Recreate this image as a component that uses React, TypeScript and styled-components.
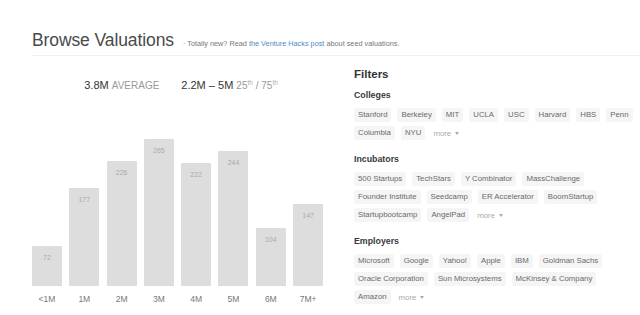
import React from 'react'
import styled, { createGlobalStyle } from 'styled-components'

const GlobalStyle = createGlobalStyle`
	body {
		margin: 0;
		background: #fff;
		font-family: "Liberation Sans", Helvetica, Arial, sans-serif;
	}
`

const bars = [
	{ label: '<1M', value: 72 },
	{ label: '1M', value: 177 },
	{ label: '2M', value: 226 },
	{ label: '3M', value: 265 },
	{ label: '4M', value: 222 },
	{ label: '5M', value: 244 },
	{ label: '6M', value: 104 },
	{ label: '7M+', value: 147 }
]

const filters = [
	{
		title: 'Colleges',
		items: ['Stanford', 'Berkeley', 'MIT', 'UCLA', 'USC', 'Harvard', 'HBS', 'Penn', 'Columbia', 'NYU']
	},
	{
		title: 'Incubators',
		items: ['500 Startups', 'TechStars', 'Y Combinator', 'MassChallenge', 'Founder Institute', 'Seedcamp', 'ER Accelerator', 'BoomStartup', 'Startupbootcamp', 'AngelPad']
	},
	{
		title: 'Employers',
		items: ['Microsoft', 'Google', 'Yahoo!', 'Apple', 'IBM', 'Goldman Sachs', 'Oracle Corporation', 'Sun Microsystems', 'McKinsey & Company', 'Amazon']
	}
]

// px per valuation count
const SCALE = 0.555

const Page = styled.div`
	padding-left: 32px;
	width: 608px;
	overflow: hidden;
`

const Header = styled.div`
	display: flex;
	align-items: baseline;
	padding-top: 30px;
	padding-bottom: 5px;
	border-bottom: 1px solid #eeeeee;
`

const Title = styled.h1`
	margin: 0;
	font-size: 17.5px;
	font-weight: normal;
	color: #4a4a4a;
	line-height: 20px;
	letter-spacing: -0.1px;
`

const Subtitle = styled.span`
	margin-left: 9px;
	font-size: 7.3px;
	color: #777;

	a {
		color: #4a8ac8;
		text-decoration: none;
	}
`

const Main = styled.div`
	display: flex;
`

const ChartColumn = styled.div`
	width: 298px;
	display: flex;
	flex-direction: column;
`

const Stats = styled.div`
	display: flex;
	justify-content: center;
	gap: 22px;
	padding-top: 23px;
	height: 20px;
	font-size: 11px;
`

const Stat = styled.div`
	color: #333;

	span {
		color: #999;
		font-size: 10px;
	}

	sup {
		color: #aaa;
		font-size: 6.5px;
		line-height: 0;
	}
`

const Bars = styled.div`
	display: flex;
	align-items: flex-end;
	gap: 7.3px;
	height: 187px;
`

const Bar = styled.div`
	width: 30px;
	background: #dddddd;
	border-radius: 1px 1px 0 0;
	text-align: center;
	font-size: 7px;
	color: #aaa;
	padding-top: 8px;
	box-sizing: border-box;
`

const Labels = styled.div`
	display: flex;
	gap: 7.3px;
	padding-top: 8px;
`

const Label = styled.div`
	width: 30px;
	text-align: center;
	font-size: 8.5px;
	color: #777;
`

const FilterColumn = styled.div`
	margin-left: 24px;
	flex: 1;
	padding-top: 11px;
`

const FiltersHeading = styled.h2`
	margin: 0 0 9px;
	font-size: 11.5px;
	font-weight: bold;
	color: #333;
	line-height: 14px;
`

const Section = styled.div`
	margin-bottom: 14px;
`

const SectionTitle = styled.h3`
	margin: 0 0 7px;
	font-size: 8.8px;
	font-weight: bold;
	color: #3a3a3a;
	line-height: 11px;
`

const Tags = styled.div`
	display: flex;
	flex-wrap: wrap;
	align-items: center;
	gap: 4px 6px;
	width: 282px;
`

const Tag = styled.span`
	display: inline-block;
	height: 14px;
	line-height: 14px;
	padding: 0 4px;
	font-size: 7.8px;
	color: #6a6a6a;
	background: #f5f5f5;
	border-radius: 3px;
	box-sizing: border-box;
`

const More = styled.span`
	font-size: 7.8px;
	color: #aaa;
	margin-left: 2px;

	&::after {
		content: '';
		display: inline-block;
		margin-left: 4px;
		vertical-align: 1px;
		border-left: 2px solid transparent;
		border-right: 2px solid transparent;
		border-top: 3px solid #aaa;
	}
`

const App = () => (
	<Page>
		<GlobalStyle />
		<Header>
			<Title>Browse Valuations</Title>
			<Subtitle>
				· Totally new? Read <a href="#">the Venture Hacks post</a> about seed valuations.
			</Subtitle>
		</Header>
		<Main>
			<ChartColumn>
				<Stats>
					<Stat>
						3.8M <span>AVERAGE</span>
					</Stat>
					<Stat>
						2.2M – 5M <span>25<sup>th</sup> / 75<sup>th</sup></span>
					</Stat>
				</Stats>
				<Bars>
					{bars.map(bar => (
						<Bar key={ bar.label } style={ { height: Math.round(bar.value * SCALE) } }>
							{bar.value}
						</Bar>
					))}
				</Bars>
				<Labels>
					{bars.map(bar => (
						<Label key={ bar.label }>{bar.label}</Label>
					))}
				</Labels>
			</ChartColumn>
			<FilterColumn>
				<FiltersHeading>Filters</FiltersHeading>
				{filters.map(group => (
					<Section key={ group.title }>
						<SectionTitle>{group.title}</SectionTitle>
						<Tags>
							{group.items.map(item => (
								<Tag key={ item }>{item}</Tag>
							))}
							<More>more</More>
						</Tags>
					</Section>
				))}
			</FilterColumn>
		</Main>
	</Page>
)

export default App
